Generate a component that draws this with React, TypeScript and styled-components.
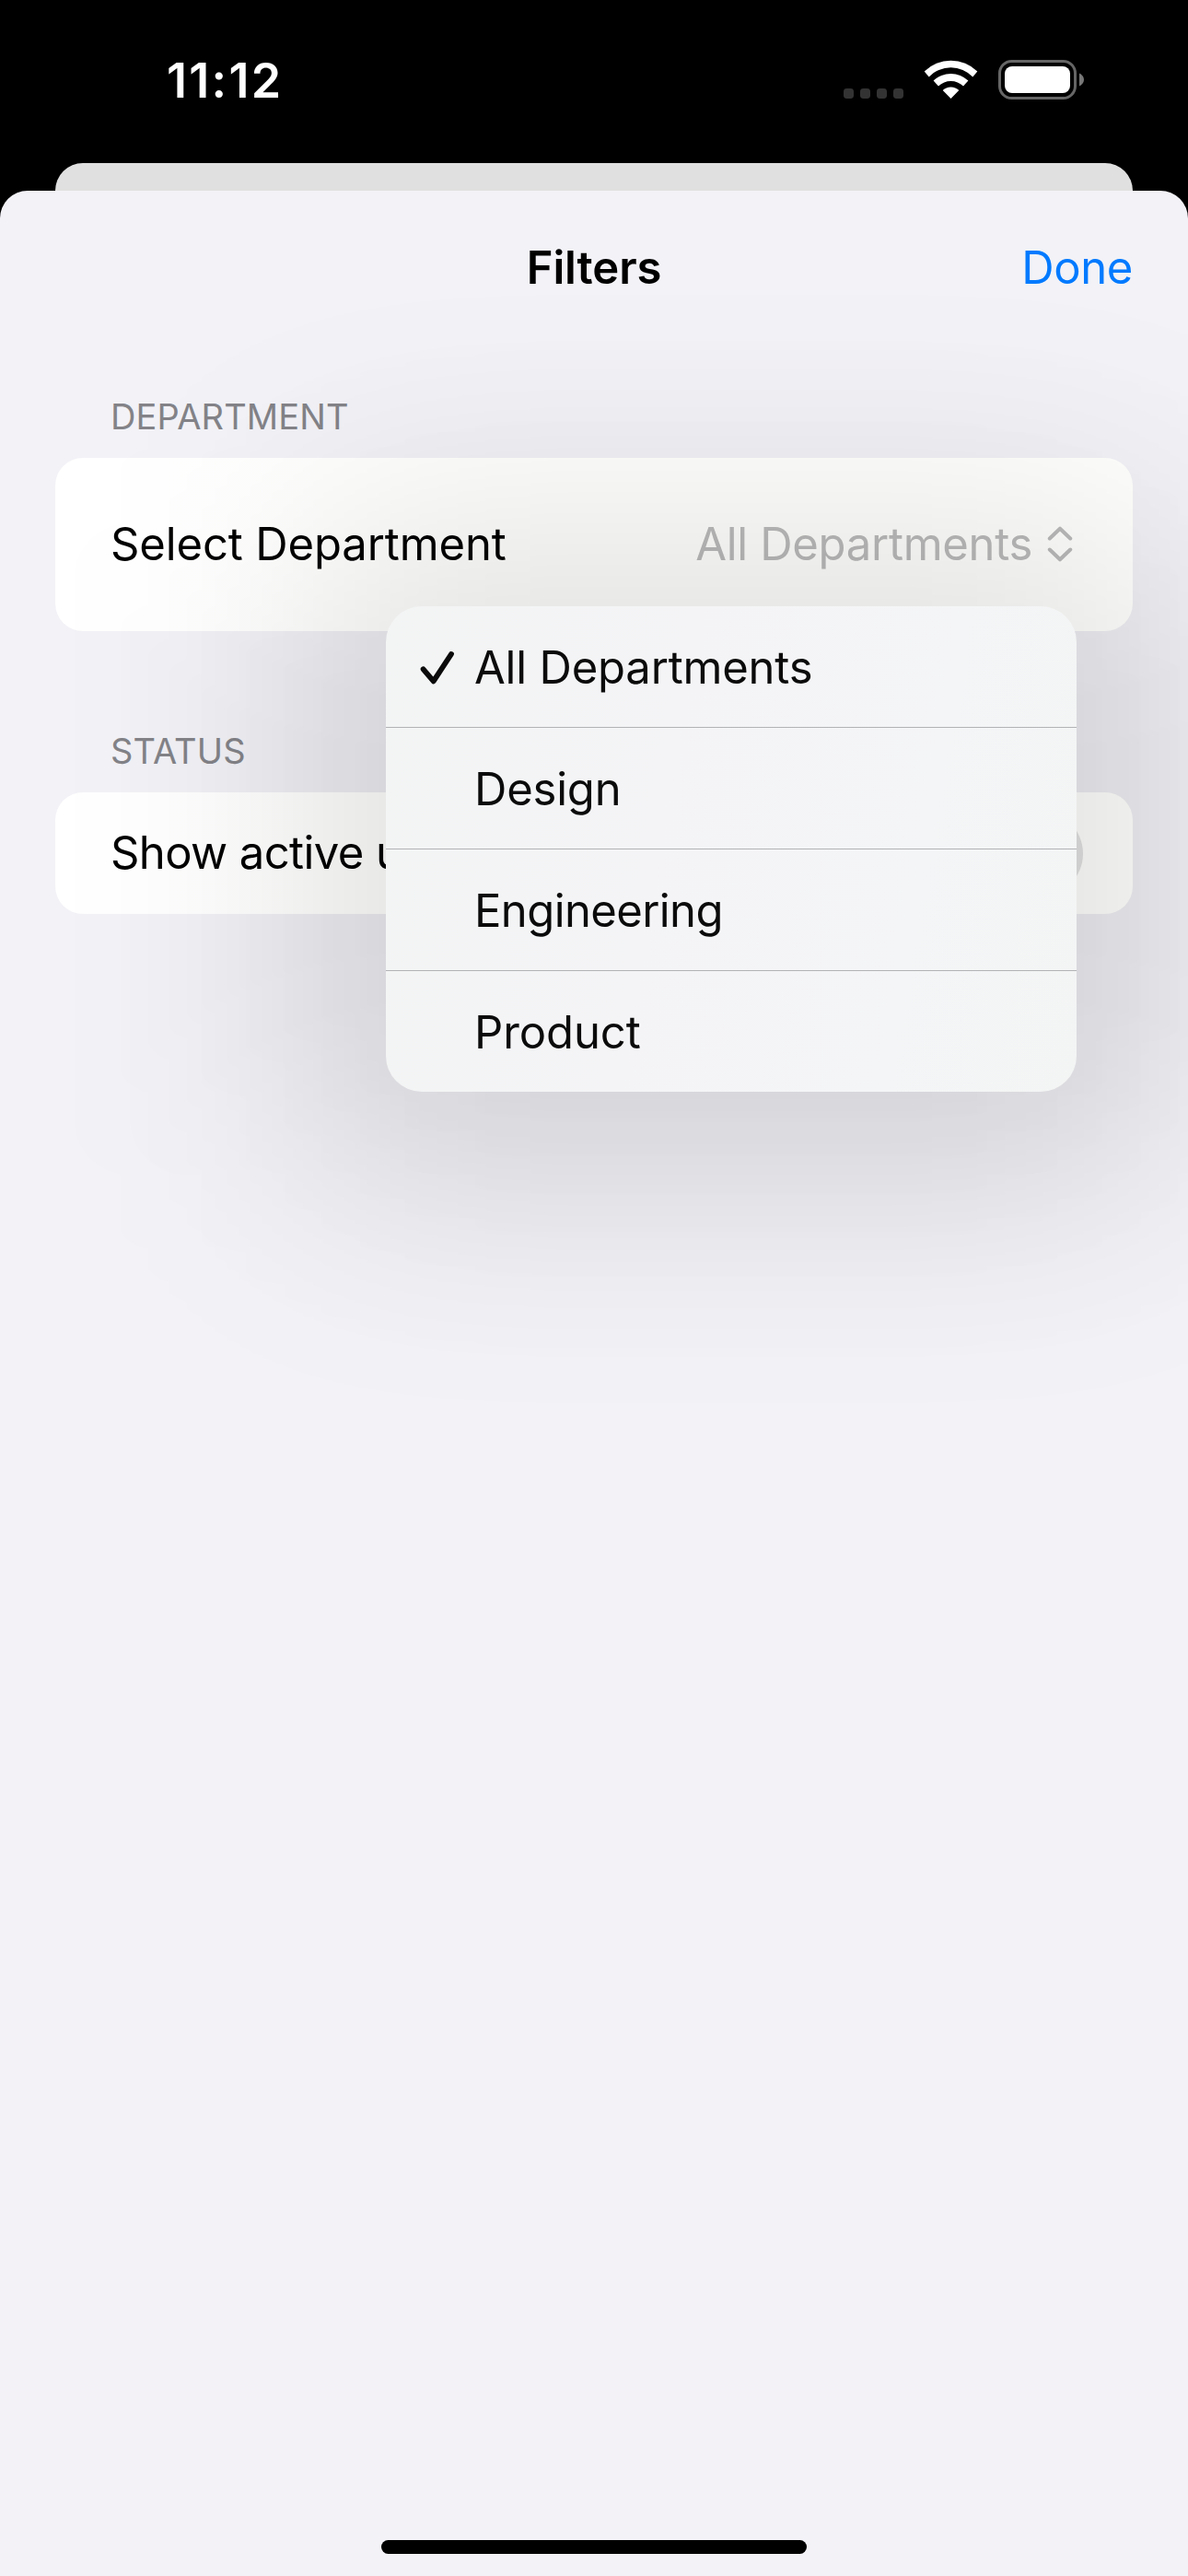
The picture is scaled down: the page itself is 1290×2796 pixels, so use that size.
import React from "react";
import styled, { createGlobalStyle } from "styled-components";

const GlobalStyle = createGlobalStyle`
  * { box-sizing: border-box; }
  body { margin: 0; background: #000; font-family: Inter, "Liberation Sans", sans-serif; }
`;

const Screen = styled.div`
  width: 1290px;
  height: 2796px;
  display: flex;
  flex-direction: column;
  overflow: hidden;
  background: #000;
`;

const StatusBar = styled.header`
  height: 177px;
  flex: none;
  display: flex;
  justify-content: space-between;
  padding: 65px 113px 0 181px;
`;

const Clock = styled.time`
  height: 46px;
  line-height: 46px;
  font-size: 52px;
  font-weight: 600;
  letter-spacing: 2.3px;
  color: #fff;
`;

const StatusIcons = styled.svg`
  width: 264px;
  height: 46px;
  display: block;
`;

const BackCard = styled.div`
  height: 30px;
  flex: none;
  margin: 0 60px;
  border-radius: 30px 30px 0 0;
  background: #e0e0e0;
`;

const Sheet = styled.main`
  position: relative;
  isolation: isolate;
  flex: 1;
  display: flex;
  flex-direction: column;
  overflow: hidden;
  border-radius: 30px 30px 0 0;
  background: #f2f2f7;
`;

/* Extra darkening that falls on the sheet but stays behind the cards. */
const GroundShadow = styled.div`
  position: absolute;
  z-index: -1;
  top: 361px;
  left: 329px;
  width: 930px;
  height: 707px;
  border-radius: 60px;
  background: rgba(0, 0, 0, 0.03);
  filter: blur(128px);
`;

const NavBar = styled.nav`
  height: 168px;
  flex: none;
  display: grid;
  grid-template-columns: 1fr auto 1fr;
  align-items: center;
  padding: 0 60px;
`;

const Title = styled.h1`
  grid-column: 2;
  margin: 0;
  font-size: 49px;
  line-height: 60px;
  font-weight: 600;
  letter-spacing: -0.1px;
  color: #000;
`;

const DoneButton = styled.button`
  justify-self: end;
  border: 0;
  padding: 0;
  background: none;
  font: 400 49px/60px Inter, sans-serif;
  letter-spacing: -0.4px;
  color: #007aff;
`;

const Section = styled.section<{ $gap: number }>`
  flex: none;
  padding: 0 60px;
  margin-top: ${(p) => p.$gap}px;
`;

const SectionLabel = styled.h2`
  margin: 0;
  height: 74px;
  padding: 0 60px;
  font-size: 38px;
  line-height: 58px;
  font-weight: 400;
  letter-spacing: 0.15px;
  color: #838388;
`;

const Card = styled.div<{ $height: number }>`
  position: relative;
  height: ${(p) => p.$height}px;
  display: flex;
  align-items: center;
  justify-content: space-between;
  padding: 0 54px 0 60px;
  border-radius: 30px;
  background: linear-gradient(90deg, #fff 10%, #fffffd 40%);
`;

const PickerCard = styled(Card)`
  z-index: 1;
`;

const RowLabel = styled.span<{ $tracking: number }>`
  font-size: 49px;
  line-height: 60px;
  letter-spacing: ${(p) => p.$tracking}px;
  white-space: nowrap;
  color: #000;
`;

const PickerValue = styled.div`
  display: flex;
  align-items: center;
  gap: 16px;
  margin-right: 11px;
  font-size: 49px;
  line-height: 60px;
  letter-spacing: -0.3px;
  color: #bababa;
`;

const Switch = styled.span`
  width: 153px;
  height: 93px;
  border-radius: 47px;
  background: #e2e2e2;
`;

const MenuLayer = styled.div`
  position: absolute;
  z-index: 2;
  top: 161px;
  right: 61px;
  width: 750px;

  &::before {
    content: "";
    position: absolute;
    inset: -90px;
    border-radius: 60px;
    background: rgba(0, 0, 0, 0.112);
    filter: blur(128px);
  }
`;

const Menu = styled.ul`
  position: relative;
  margin: 0;
  padding: 0;
  list-style: none;
  border-radius: 39px;
  background: linear-gradient(100deg, #f3f4f4, #f4f4f6 40%, #f4f5f6 75%, #f3f4f4);
`;

const MenuItem = styled.li<{ $tracking: number }>`
  height: 131px;
  display: grid;
  grid-template-columns: 60px 1fr;
  align-items: center;
  padding-left: 36px;
  font-size: 49px;
  line-height: 60px;
  letter-spacing: ${(p) => p.$tracking}px;
  color: #0b0b0b;

  & + & {
    height: 132px;
    border-top: 1px solid #b2b3b5;
  }
`;

const ItemText = styled.span`
  grid-column: 2;
  padding-top: 2px;
`;

const HomeIndicator = styled.div`
  width: 462px;
  height: 15px;
  margin: auto auto 24px;
  border-radius: 8px;
  background: #000;
`;

const departments = [
  { name: "All Departments", tracking: -0.2 },
  { name: "Design", tracking: -0.2 },
  { name: "Engineering", tracking: -0.6 },
  { name: "Product", tracking: -0.1 },
];

function SystemIcons() {
  return (
    <StatusIcons viewBox="913 65 264 46" fill="none">
      {[916, 934, 952, 970].map((x) => (
        <rect key={x} x={x} y="96" width="11" height="11" rx="3.4" fill="#333" />
      ))}
      <path
        d="M1003.7 77.5 A41 41 0 0 1 1061.3 77.5 L1056.3 83.4 A33 33 0 0 0 1008.7 83.4 Z
           M1013.6 87.6 A27 27 0 0 1 1051.4 87.6 L1046 93.5 A19.5 19.5 0 0 0 1019 93.5 Z
           M1023.7 98 A12.5 12.5 0 0 1 1041.3 98 L1032.5 107 Z"
        fill="#fff"
      />
      <rect x="1085.5" y="66.5" width="82" height="40" rx="13" stroke="#666" strokeWidth="3" />
      <rect x="1091" y="72" width="71" height="29" rx="8" fill="#fff" />
      <path d="M1172 79.5 C1175 81 1177 83.5 1177 86.5 S1175 92 1172 93.5 Z" fill="#777" />
    </StatusIcons>
  );
}

export default function App() {
  return (
    <>
      <GlobalStyle />
      <Screen>
        <StatusBar>
          <Clock>11:12</Clock>
          <SystemIcons />
        </StatusBar>
        <BackCard />
        <Sheet>
          <GroundShadow />
          <NavBar>
            <Title>Filters</Title>
            <DoneButton>Done</DoneButton>
          </NavBar>
          <Section $gap={48}>
            <SectionLabel>DEPARTMENT</SectionLabel>
            <PickerCard $height={188}>
              <RowLabel $tracking={-0.13}>Select Department</RowLabel>
              <PickerValue>
                All Departments
                <svg width="28" height="42" viewBox="0 0 28 42" fill="none" stroke="currentColor" strokeWidth="4" strokeLinecap="round" strokeLinejoin="round">
                  <path d="M2.8 14.5 L14 3.7 L25.2 14.5 M2.8 26.5 L14 37.3 L25.2 26.5" />
                </svg>
              </PickerValue>
              <MenuLayer>
                <Menu>
                  {departments.map((item, i) => (
                    <MenuItem key={item.name} $tracking={item.tracking}>
                      {i === 0 && (
                        <svg width="40" height="40" viewBox="0 0 40 40" fill="none" stroke="currentColor" strokeWidth="5.8" strokeLinecap="round" strokeLinejoin="round">
                          <path d="M4.6 22.3 L15.7 35.4 L35 6" />
                        </svg>
                      )}
                      <ItemText>{item.name}</ItemText>
                    </MenuItem>
                  ))}
                </Menu>
              </MenuLayer>
            </PickerCard>
          </Section>
          <Section $gap={101}>
            <SectionLabel>STATUS</SectionLabel>
            <Card $height={132}>
              <RowLabel $tracking={-0.6}>Show active users</RowLabel>
              <Switch />
            </Card>
          </Section>
          <HomeIndicator />
        </Sheet>
      </Screen>
    </>
  );
}
